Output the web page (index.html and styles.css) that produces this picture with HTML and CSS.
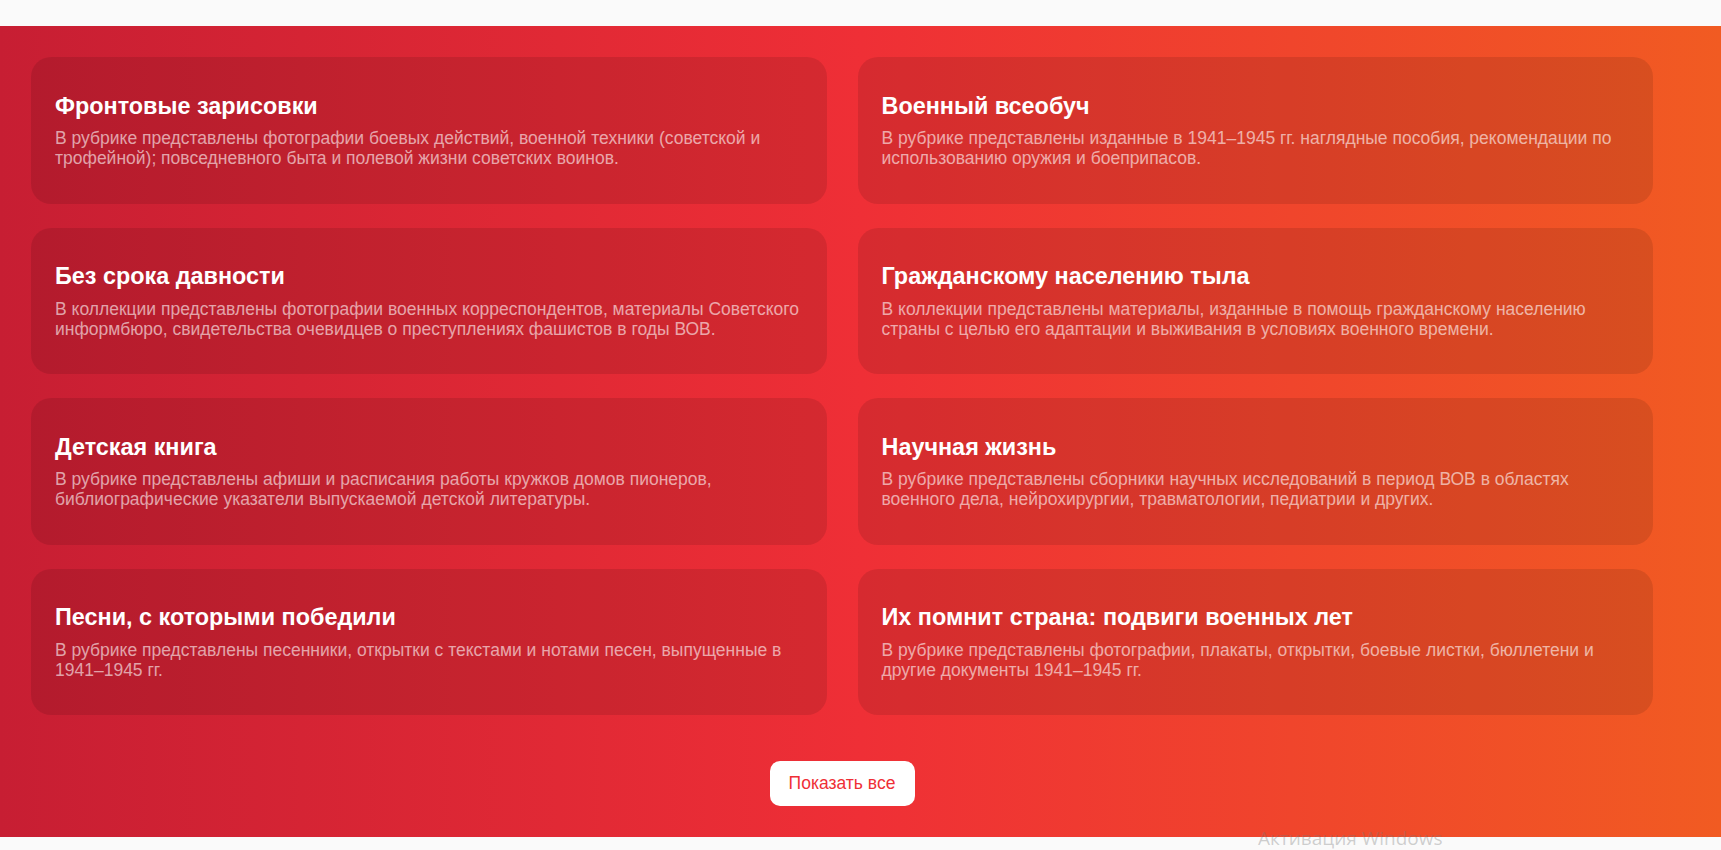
FILE: index.html
```html
<!DOCTYPE html>
<html lang="ru">
<head>
    <meta charset="UTF-8">
    <meta name="viewport" content="width=device-width, initial-scale=1.0">
    <title>Рубрики</title>
    <link rel="stylesheet" href="styles.css">
</head>
<body>
    <div class="top-bar"></div>

    <section class="rubrics">
        <div class="container">
            <div class="rubric-grid">
                <a class="rubric-card" href="#">
                    <h3>Фронтовые зарисовки</h3>
                    <p>В рубрике представлены фотографии боевых действий, военной техники (советской и трофейной); повседневного быта и полевой жизни советских воинов.</p>
                </a>
                <a class="rubric-card" href="#">
                    <h3>Военный всеобуч</h3>
                    <p>В рубрике представлены изданные в 1941–1945 гг. наглядные пособия, рекомендации по использованию оружия и боеприпасов.</p>
                </a>
                <a class="rubric-card" href="#">
                    <h3>Без срока давности</h3>
                    <p>В коллекции представлены фотографии военных корреспондентов, материалы Советского информбюро, свидетельства очевидцев о преступлениях фашистов в годы ВОВ.</p>
                </a>
                <a class="rubric-card" href="#">
                    <h3>Гражданскому населению тыла</h3>
                    <p>В коллекции представлены материалы, изданные в помощь гражданскому населению страны с целью его адаптации и выживания в условиях военного времени.</p>
                </a>
                <a class="rubric-card" href="#">
                    <h3>Детская книга</h3>
                    <p>В рубрике представлены афиши и расписания работы кружков домов пионеров, библиографические указатели выпускаемой детской литературы.</p>
                </a>
                <a class="rubric-card" href="#">
                    <h3>Научная жизнь</h3>
                    <p>В рубрике представлены сборники научных исследований в период ВОВ в областях военного дела, нейрохирургии, травматологии, педиатрии и других.</p>
                </a>
                <a class="rubric-card" href="#">
                    <h3>Песни, с которыми победили</h3>
                    <p>В рубрике представлены песенники, открытки с текстами и нотами песен, выпущенные в 1941–1945 гг.</p>
                </a>
                <a class="rubric-card" href="#">
                    <h3>Их помнит страна: подвиги военных лет</h3>
                    <p>В рубрике представлены фотографии, плакаты, открытки, боевые листки, бюллетени и другие документы 1941–1945 гг.</p>
                </a>
            </div>

            <div class="more">
                <button class="more-btn">Показать все</button>
            </div>
        </div>
    </section>

    <div class="bottom-bar"></div>

    <div class="os-mark">Активация Windows</div>
</body>
</html>
```

FILE: styles.css
```css
body {
    margin: 0;
    background: #fafafa;
    font-family: "Liberation Sans", Arial, sans-serif;
}

.top-bar {
    height: 26px;
    background: #fafafa;
}

.rubrics {
    background: linear-gradient(90deg, #c71e33 0%, #ef2f36 50%, #f15b22 100%);
    padding: 31px 0 31px;
}

.container {
    width: 1622px;
    margin-left: 31px;
}

.rubric-grid {
    display: grid;
    grid-template-columns: 1fr 1fr;
    column-gap: 31px;
    row-gap: 24px;
}

.rubric-card {
    display: block;
    box-sizing: border-box;
    height: 146.5px;
    padding: 35.5px 24px 35px;
    border-radius: 20px;
    background: rgba(0, 0, 0, 0.1);
    text-decoration: none;
}

.rubric-card h3 {
    margin: 0 0 9.5px;
    font-size: 23.4px;
    line-height: 26px;
    font-weight: bold;
    color: #fff;
}

.rubric-card p {
    margin: 0;
    font-size: 17.5px;
    line-height: 20px;
    color: rgba(255, 255, 255, 0.6);
}

.more {
    display: flex;
    justify-content: center;
    margin-top: 46px;
}

.more-btn {
    width: 145px;
    height: 45px;
    padding: 0;
    border: none;
    border-radius: 10px;
    background: #fff;
    color: #ef2f36;
    font-family: "Liberation Sans", Arial, sans-serif;
    font-size: 17.5px;
    cursor: pointer;
}

.bottom-bar {
    height: 13px;
    background: #fafafa;
}

/* system watermark sitting over the page corner */
.os-mark {
    position: absolute;
    left: 1258px;
    top: 829px;
    font-family: "Open Sans", sans-serif;
    font-size: 19px;
    line-height: 1;
    color: rgba(120, 120, 120, 0.35);
    white-space: nowrap;
}
```
